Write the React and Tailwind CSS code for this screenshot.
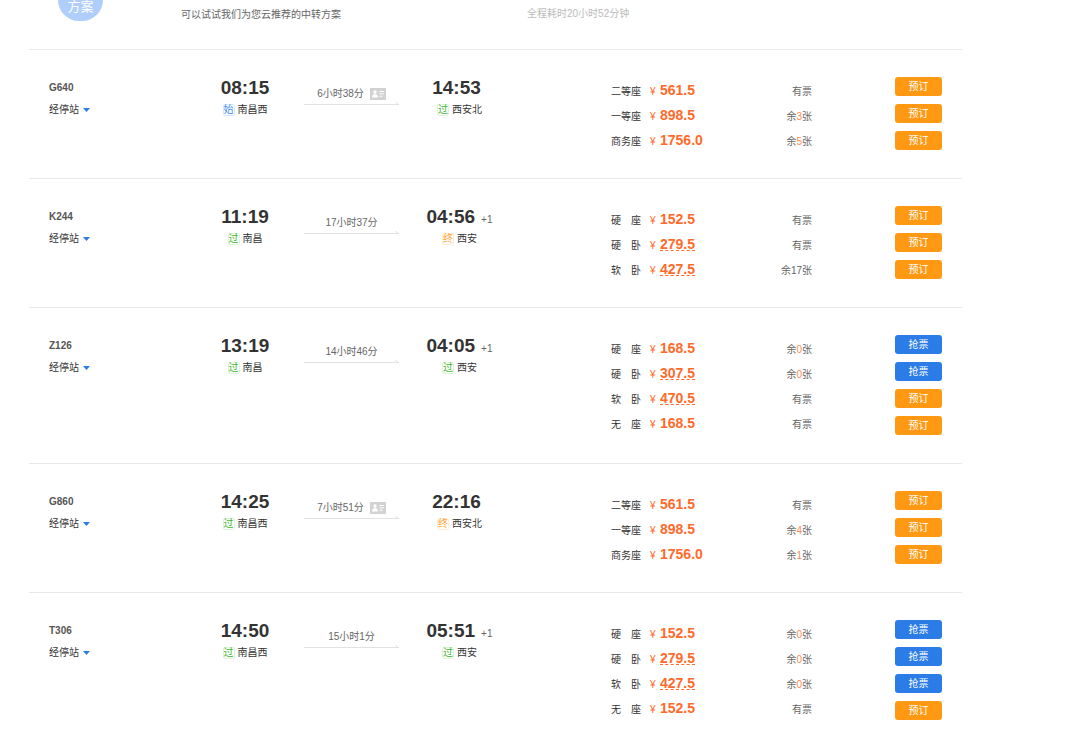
import React from 'react';

const trains = [
  {
    code: 'G640',
    from: { time: '08:15', type: '始', name: '南昌西' },
    to: { time: '14:53', type: '过', name: '西安北' },
    duration: '6小时38分',
    idCard: true,
    seats: [
      { label: '二等座', price: '561.5' },
      { label: '一等座', price: '898.5', left: 3 },
      { label: '商务座', price: '1756.0', left: 5 },
    ],
  },
  {
    code: 'K244',
    from: { time: '11:19', type: '过', name: '南昌' },
    to: { time: '04:56', type: '终', name: '西安', nextDay: true },
    duration: '17小时37分',
    seats: [
      { label: '硬　座', price: '152.5' },
      { label: '硬　卧', price: '279.5', berth: true },
      { label: '软　卧', price: '427.5', berth: true, left: 17 },
    ],
  },
  {
    code: 'Z126',
    from: { time: '13:19', type: '过', name: '南昌' },
    to: { time: '04:05', type: '过', name: '西安', nextDay: true },
    duration: '14小时46分',
    seats: [
      { label: '硬　座', price: '168.5', left: 0 },
      { label: '硬　卧', price: '307.5', berth: true, left: 0 },
      { label: '软　卧', price: '470.5', berth: true },
      { label: '无　座', price: '168.5' },
    ],
  },
  {
    code: 'G860',
    from: { time: '14:25', type: '过', name: '南昌西' },
    to: { time: '22:16', type: '终', name: '西安北' },
    duration: '7小时51分',
    idCard: true,
    seats: [
      { label: '二等座', price: '561.5' },
      { label: '一等座', price: '898.5', left: 4 },
      { label: '商务座', price: '1756.0', left: 1 },
    ],
  },
  {
    code: 'T306',
    from: { time: '14:50', type: '过', name: '南昌西' },
    to: { time: '05:51', type: '过', name: '西安', nextDay: true },
    duration: '15小时1分',
    seats: [
      { label: '硬　座', price: '152.5', left: 0 },
      { label: '硬　卧', price: '279.5', berth: true, left: 0 },
      { label: '软　卧', price: '427.5', berth: true, left: 0 },
      { label: '无　座', price: '152.5' },
    ],
  },
];

const badgeStyles = {
  始: 'text-[#3b8bf0] border-[#d9e9fd]',
  过: 'text-[#3fb52f] border-[#dcf5d8]',
  终: 'text-[#ffa22e] border-[#ffedd2]',
};

const IdCardIcon = () => (
  <svg width="16" height="12" viewBox="0 0 16 12" aria-label="支持身份证进站">
    <rect width="16" height="12" fill="#d2d2d2" />
    <circle cx="5" cy="4" r="1.7" fill="#fff" />
    <path d="M2 9.5c0-2 1.2-3.4 3-3.4s3 1.4 3 3.4z" fill="#fff" />
    <path d="M9.5 3.5H14M9.5 5.9H14M9.5 8.3H12.5" stroke="#fff" strokeWidth="1" />
  </svg>
);

const Station = ({ time, type, name, nextDay }) => (
  <div className="flex flex-col items-center">
    <div className="flex items-baseline gap-[6px]">
      <strong className="text-[19px] leading-[22px] font-bold text-[#333]">{time}</strong>
      {nextDay !== undefined && <span className="text-[10px] text-[#666]">{nextDay ? '+1' : ''}</span>}
    </div>
    <div className="flex items-center gap-[3px] mt-[4px]">
      <span className={`flex items-center justify-center w-[12px] h-[12px] border rounded-xs text-[10px] leading-[10px] ${badgeStyles[type]}`}>
        {type}
      </span>
      <span className="text-[10px] leading-[14px] text-[#333]">{name}</span>
    </div>
  </div>
);

const Duration = ({ duration, idCard }) => (
  <div className="px-[10px] pt-[9px]">
    <div className="flex items-center justify-center gap-[6px] h-[16px] text-[10px] leading-[16px] text-[#666]">
      <span>{duration}</span>
      {idCard && <IdCardIcon />}
    </div>
    <div className="flex justify-end h-[3px] border-b border-[#e2e2e2]">
      <svg width="4" height="3" viewBox="0 0 4 3">
        <path d="M0.5 0L3.5 3" stroke="#ddd" fill="none" />
      </svg>
    </div>
  </div>
);

const Seat = ({ label, price, berth, left }) => (
  <li className="flex items-center h-[25px]">
    <div className="flex-1 flex items-baseline text-[10px] leading-[16px]">
      <span className="w-[30px] text-[#333]">{label}</span>
      <span className="ml-[9px] w-[10px] text-[#ff6a2b]">¥</span>
      <strong className={`text-[14px] leading-[12px] font-bold text-[#ff6a2b] ${berth ? 'border-b border-dashed border-[#ff6a2b]' : ''}`}>
        {price}
      </strong>
      <span className="ml-auto text-[#666]">
        {left === undefined && '有票'}
        {left !== undefined && (
          <>余<span className={left < 10 ? 'text-[#ff8a4c]' : ''}>{left}</span>张</>
        )}
      </span>
    </div>
  </li>
);

const BookButton = ({ left }) => (
  <button
    type="button"
    className={`w-[47px] h-[19px] rounded-[3px] text-[10px] leading-[19px] text-white cursor-pointer ${left === 0 ? 'bg-[#2b7ce6]' : 'bg-[#ff9913]'}`}
  >
    {left === 0 ? '抢票' : '预订'}
  </button>
);

const TrainRow = ({ train }) => (
  <li className="grid grid-cols-[147fr_98fr_115fr_101fr_302fr_130fr] px-5 pt-[27px] pb-6 border-t border-[#e8e8e8]">
    <div className="flex flex-col items-start">
      <strong className="text-[10px] leading-[22px] font-bold text-[#555]">{train.code}</strong>
      <button type="button" className="flex items-center gap-[4px] mt-[4px] text-[10px] leading-[14px] text-[#333] cursor-pointer">
        经停站
        <svg width="7" height="4" viewBox="0 0 7 4">
          <path d="M0 0h7L3.5 4z" fill="#2b7ce6" />
        </svg>
      </button>
    </div>
    <Station {...train.from} />
    <Duration duration={train.duration} idCard={train.idCard} />
    <Station nextDay={false} {...train.to} />
    <ul className="pl-[101px] pt-[2px]">
      {train.seats.map((seat) => (
        <Seat key={seat.label} {...seat} />
      ))}
    </ul>
    <div className="flex flex-col items-end gap-2 pb-1">
      {train.seats.map((seat) => (
        <BookButton key={seat.label} left={seat.left} />
      ))}
    </div>
  </li>
);

const App = () => (
  <main className="bg-white pl-[29px] pr-[118px] font-['Liberation_Sans','Noto_Sans_CJK_SC',sans-serif]">
    <header className="grid grid-cols-[152fr_346fr_435fr] h-[49px] text-[10px] leading-[14px]">
      <div className="flex justify-center ml-[29px] w-[45px] h-[21px] rounded-b-full bg-[#b0cefb] text-white text-[13px] leading-[13px]">
        方案
      </div>
      <p className="pt-[8px] text-[#666]">可以试试我们为您云推荐的中转方案</p>
      <p className="pt-[7px] text-[#bbb]">全程耗时20小时52分钟</p>
    </header>
    <ul>
      {trains.map((train) => (
        <TrainRow key={train.code} train={train} />
      ))}
    </ul>
  </main>
);

export default App;
